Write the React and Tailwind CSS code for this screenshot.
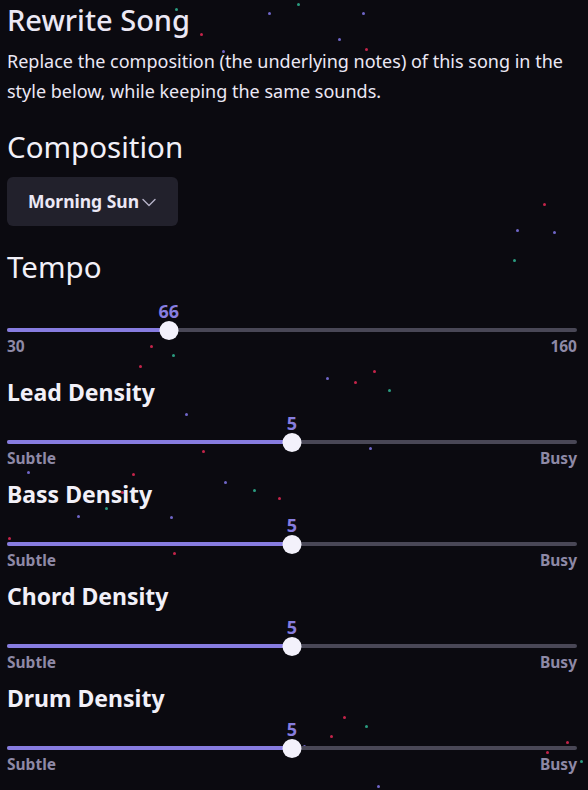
import React from 'react';

const dots = [
    [175, 8, 'g'], [268, 12, 'p'], [297, 3, 'g'], [362, 12, 'p'], [200, 33, 'r'], [338, 38, 'p'],
    [222, 50, 'p'], [365, 48, 'r'], [543, 203, 'r'], [516, 229, 'p'], [553, 231, 'p'], [513, 259, 'g'],
    [150, 345, 'r'], [172, 354, 'g'], [139, 365, 'r'], [326, 377, 'p'], [354, 381, 'r'], [373, 370, 'r'],
    [388, 389, 'g'], [185, 413, 'p'], [202, 450, 'r'], [369, 447, 'p'], [27, 471, 'p'], [132, 473, 'r'],
    [224, 481, 'p'], [253, 489, 'g'], [121, 491, 'r'], [278, 497, 'r'], [105, 507, 'g'], [77, 515, 'p'],
    [170, 516, 'p'], [8, 537, 'r'], [146, 543, 'p'], [173, 552, 'r'], [343, 716, 'r'], [365, 725, 'g'],
    [330, 735, 'r'], [303, 745, 'p'], [518, 747, 'p'], [546, 751, 'r'], [566, 741, 'r'], [580, 760, 'g'],
    [377, 785, 'p'],
];

const dotColor = { g: 'bg-[#2a9c80]', p: 'bg-[#6f66c8]', r: 'bg-[#c4244a]' };

const Slider = ({ value, min, max, minLabel, maxLabel }) => {
    const p = (value - min) / (max - min);
    const left = `calc(9px + ${p} * (100% - 18px))`;
    return (
        <div>
            <div className="relative h-[20px]">
                <span className="absolute -translate-x-1/2 text-[18px] font-bold leading-[20px] text-[#877ddf]" style={{ left }}>
                    {value}
                </span>
            </div>
            <div className="relative h-[18px] flex items-center">
                <div className="h-[4px] w-full rounded-full bg-[#494756] overflow-hidden">
                    <div className="h-full bg-[#877ce0]" style={{ width: left }} />
                </div>
                <div className="absolute w-[19px] h-[19px] rounded-full bg-[#f3f1fb] -translate-x-1/2" style={{ left }} />
            </div>
            <div className="flex justify-between text-[15.5px] font-bold leading-[14px] text-[#8e89a6]">
                <span>{minLabel}</span>
                <span>{maxLabel}</span>
            </div>
        </div>
    );
};

const Density = ({ title, first }) => (
    <div className={first ? 'mt-[25px]' : 'mt-[15px]'}>
        <h3 className="mb-[7px] text-[23px] font-bold leading-[28px] text-[#f2f0f8]">{title}</h3>
        <Slider value={5} min={0} max={10} minLabel="Subtle" maxLabel="Busy" />
    </div>
);

export default function App() {
    return (
        <div className="relative w-full min-h-screen bg-[#0b0a10] overflow-hidden px-[7px] pr-[11px]" style={{ fontFamily: '"Noto Sans", Lato, sans-serif' }}>
            {dots.map(([x, y, c], i) => (
                <span key={i} className={`absolute w-[3px] h-[3px] rounded-full ${dotColor[c]}`} style={{ left: x, top: y }} />
            ))}

            <div className="relative">
                <h1 className="text-[29px] font-medium leading-[40px] text-[#ebe8f5]">Rewrite Song</h1>
                <p className="mt-[6px] text-[18px] leading-[30px] text-[#ebe8f5]">
                    Replace the composition (the underlying notes) of this song in the style below, while keeping the same sounds.
                </p>

                <h2 className="mt-[21px] text-[29.5px] leading-[40px] text-[#f2f0f8]">Composition</h2>
                <button className="mt-[10px] h-[49px] w-[171px] rounded-[6px] bg-[#22212c] flex items-center justify-center gap-[2px] text-[17.5px] font-bold text-[#ebe8f5]">
                    Morning Sun
                    <svg width="16" height="16" viewBox="0 0 16 16" fill="none" stroke="#b6b2c8" strokeWidth="1.4" strokeLinecap="round" strokeLinejoin="round">
                        <path d="M2 5.5l6 6 6-6" />
                    </svg>
                </button>

                <h2 className="mt-[21px] text-[29.5px] leading-[40px] text-[#f2f0f8]">Tempo</h2>
                <div className="mt-[14px]">
                    <Slider value={66} min={30} max={160} minLabel="30" maxLabel="160" />
                </div>

                <Density title="Lead Density" first />
                <Density title="Bass Density" />
                <Density title="Chord Density" />
                <Density title="Drum Density" />
            </div>
        </div>
    );
}
